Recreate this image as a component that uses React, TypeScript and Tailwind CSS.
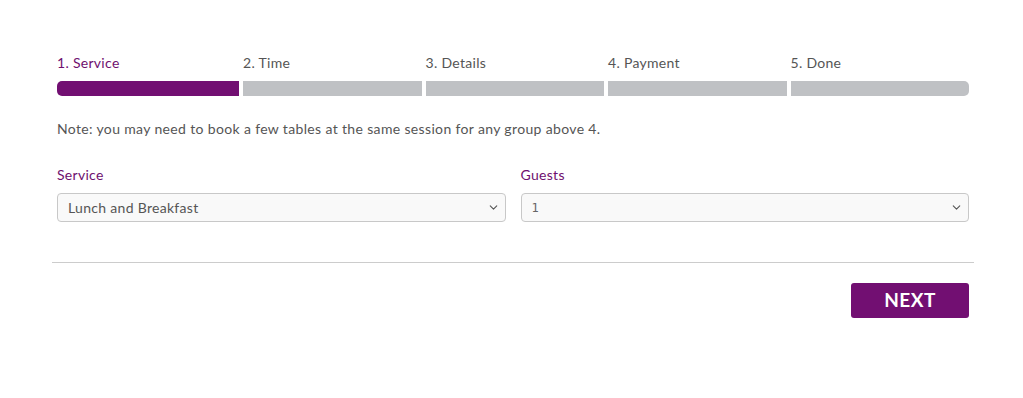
import { ChevronDown } from 'lucide-react';

const steps = ['1. Service', '2. Time', '3. Details', '4. Payment', '5. Done'];

function Select({ value, mono }: { value: string; mono?: boolean }) {
  return (
    <div className="relative">
      <select
        defaultValue={value}
        className={`w-full h-[29px] appearance-none rounded-[4px] border border-[#c8c8c8] bg-[#f9f9f9] pl-[10px] pr-8 text-[#555] outline-none ${
          mono ? "text-[12px] font-['DejaVu_Sans_Mono',monospace] text-[#666]" : 'text-[14px] tracking-[0.3px]'
        }`}
      >
        <option>{value}</option>
      </select>
      <ChevronDown size={13} strokeWidth={2} className="pointer-events-none absolute right-[6px] top-[8px] text-[#555]" />
    </div>
  );
}

export default function App() {
  return (
    <div className="min-h-[398px] bg-white font-['Lato',sans-serif]">
      <div className="ml-[52px] w-[922px] pt-[54px]">
        <div className="px-[5px]">
          <div className="grid grid-cols-[182px_1fr_1fr_1fr_1fr] gap-1">
            {steps.map((s, i) => (
              <div key={s}>
                <div className={`text-[14px] leading-[18px] tracking-[0.3px] ${i === 0 ? 'text-[#6f0f6f]' : 'text-[#555]'}`}>{s}</div>
                <div
                  className={`mt-[9px] h-[15px] ${i === 0 ? 'bg-[#720f72] rounded-l-[5px]' : 'bg-[#bfc1c4]'} ${
                    i === 4 ? 'rounded-r-[5px]' : ''
                  }`}
                />
              </div>
            ))}
          </div>

          <p className="mt-[24px] text-[14px] leading-[18px] tracking-[0.35px] text-[#555]">
            Note: you may need to book a few tables at the same session for any group above 4.
          </p>

          <div className="mt-[28px] grid grid-cols-2 gap-[15px]">
            <div>
              <label className="block text-[14px] leading-[18px] tracking-[0.3px] text-[#6f0f6f]">Service</label>
              <div className="mt-[9px]">
                <Select value="Lunch and Breakfast" />
              </div>
            </div>
            <div>
              <label className="block text-[14px] leading-[18px] tracking-[0.3px] text-[#6f0f6f]">Guests</label>
              <div className="mt-[9px]">
                <Select value="1" mono />
              </div>
            </div>
          </div>
        </div>

        <hr className="mt-[40px] border-t border-[#cccccc]" />

        <div className="flex justify-end px-[5px] pt-[20px]">
          <button className="h-[35px] w-[118px] rounded-[3px] bg-[#720f72] text-[19px] font-bold tracking-wide text-white">
            NEXT
          </button>
        </div>
      </div>
    </div>
  );
}
